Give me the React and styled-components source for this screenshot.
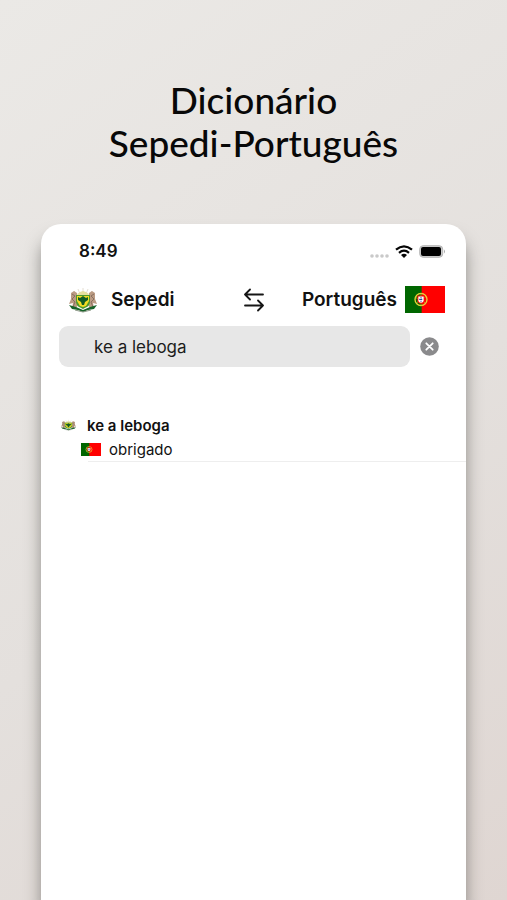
import React, { useState } from 'react'
import styled, { createGlobalStyle } from 'styled-components'

const GlobalStyle = createGlobalStyle`
    * {
        box-sizing: border-box;
    }
    body {
        margin: 0;
        font-family: Inter, "Liberation Sans", sans-serif;
        color: #111;
    }
    button {
        border: none;
        background: none;
        padding: 0;
        color: inherit;
        font-family: inherit;
        cursor: pointer;
    }
`

const Page = styled.div`
    min-height: 100vh;
    display: flex;
    flex-direction: column;
    background: linear-gradient(145deg, #ebe9e6 0%, #e4e0dd 55%, #dfd6d2 100%);
    overflow: hidden;
`

const Title = styled.h1`
    margin: 0;
    padding: 78px 16px 60px;
    font-family: Lato, sans-serif;
    font-size: 37px;
    font-weight: 500;
    line-height: 43px;
    text-align: center;
    color: #080808;
`

const Phone = styled.main`
    flex: 1;
    margin: 0 41px;
    background: #fff;
    border-radius: 20px 20px 0 0;
    box-shadow: 0 14px 16px rgba(60, 60, 55, 0.5);
`

const StatusBar = styled.div`
    display: flex;
    align-items: center;
    justify-content: space-between;
    height: 54px;
    padding: 0 20px 0 38px;
    font-size: 17px;
    font-weight: 600;
`

const StatusIcons = styled.div`
    display: flex;
    align-items: center;
    gap: 6px;

    svg:first-child {
        align-self: flex-end;
    }
`

const Languages = styled.div`
    display: grid;
    grid-template-columns: 1fr auto 1fr;
    align-items: center;
    height: 43px;
    padding: 0 21px;
`

const Language = styled.button`
    display: flex;
    align-items: center;
    justify-content: ${props => (props.$end ? "flex-end" : "flex-start")};
    gap: ${props => (props.$end ? "8px" : "14px")};
    padding-left: ${props => (props.$end ? "0" : "7px")};
    font-size: 19px;
    font-weight: 600;
`

const IconButton = styled.button`
    display: flex;
`

const SearchForm = styled.form`
    display: flex;
    align-items: center;
    gap: 10px;
    padding: 5px 27px 0 18px;
`

const SearchInput = styled.input`
    flex: 1;
    min-width: 0;
    height: 41px;
    padding: 0 35px;
    border: none;
    border-radius: 9px;
    outline: none;
    background: #e7e7e7;
    font-family: inherit;
    font-size: 17px;
    color: #1c1c1c;
`

const Results = styled.ul`
    list-style: none;
    margin: 0;
    padding: 46px 0 0 20px;
`

const Result = styled.li`
    display: flex;
    flex-direction: column;
`

const Line = styled.div`
    display: flex;
    align-items: center;
    height: 24px;
    gap: ${props => (props.$translation ? "8px" : "11px")};
    padding-left: ${props => (props.$translation ? "20px" : "0")};
    font-size: 15px;
    font-weight: ${props => (props.$translation ? "400" : "600")};
`

const Divider = styled.hr`
    align-self: stretch;
    height: 1px;
    margin: 0 0 0 27px;
    border: none;
    background: #eee;
`

const Flag = ({ width, height }) => (
    <svg width={width} height={height} viewBox="0 0 60 40" preserveAspectRatio="none" aria-hidden="true">
        <path fill="#f00" d="M0 0h60v40H0z" />
        <path fill="#060" d="M0 0h25v40H0z" />
        <circle cx="24" cy="20" r="9" fill="none" stroke="#e8d23a" strokeWidth="2" />
        <path d="M16 17l15 8M17 25l14-9M24 11v18" stroke="#c8b928" strokeWidth="1.2" />
        <path fill="#f00" d="M18.5 14h11v7c0 7-11 7-11 0z" />
        <path fill="#fff" d="M20 15.5h8V21c0 5-8 5-8 0z" />
        <path d="M24 16.5v7M21.3 19.7h5.4" stroke="#254b9b" strokeWidth="1.8" strokeDasharray="1.8 .8" />
    </svg>
)

const Crest = ({ width, height }) => (
    <svg width={width} height={height} viewBox="0 0 28 28" preserveAspectRatio="none" aria-hidden="true">
        <path d="M14 8V2M11 8L9 3M17 8l2-5M8 9L5 5M20 9l3-4" stroke="#ddd6c6" strokeWidth=".8" />
        <path fill="#bb9b84" d="M2 7l3-2 3 2v4l-1 3 2 5-2 3H3l1-5-4 1 2-5zM26 7l-3-2-3 2v4l1 3-2 5 2 3h4l-1-5 4 1-2-5z" />
        <path d="M3 8l3 2-3 3 3 3-2 5M25 8l-3 2 3 3-3 3 2 5" fill="none" stroke="#887060" strokeWidth="1" />
        <path fill="#176329" d="M0 19l7 2 7 3 7-3 7-2-3 4-6 1-5 2-5-2-6-1z" />
        <path fill="#e6dfa0" d="M8 8l3-2 3-1 3 1 3 2-2 3h-8z" />
        <path fill="#4f9a2c" d="M7 9h14v6c0 5-3 6-7 8-4-2-7-3-7-8z" />
        <path fill="#f2dc23" d="M8 10h12v5l-3 5-3 1-3-1-3-5z" />
        <path fill="#125d25" d="M9 11l2 1 3-2 3 2 2-1v3l-3 2-1 3h-2l-1-3-3-2z" />
        <path d="M6 24l8 2 8-2" fill="none" stroke="#8b9785" strokeWidth="1" />
    </svg>
)

const SwapIcon = () => (
    <svg width="20" height="24" viewBox="0 0 20 24" fill="none" stroke="#161616" strokeWidth="1.8" strokeLinecap="round" strokeLinejoin="round" aria-hidden="true">
        <path d="M6 1.5L1 6.5l5 5M1 6.5h18M14 12.5l5 5-5 5M19 17.5H1" />
    </svg>
)

const SignalIcon = () => (
    <svg width="19" height="4" viewBox="0 0 19 4" fill="#c9c9c9" aria-hidden="true">
        <circle cx="2" cy="2" r="1.8" />
        <circle cx="7" cy="2" r="1.8" />
        <circle cx="12" cy="2" r="1.8" />
        <circle cx="17" cy="2" r="1.8" />
    </svg>
)

const WifiIcon = () => (
    <svg width="18" height="13" viewBox="0 0 18 13" fill="none" stroke="#050505" strokeWidth="2.2" aria-hidden="true">
        <path d="M1 4.7Q9-2 17 4.7M4 7.8Q9 3.5 14 7.8" />
        <path d="M6 10Q9 7.3 12 10L9 13z" fill="#050505" stroke="none" />
    </svg>
)

const BatteryIcon = () => (
    <svg width="27" height="13" viewBox="0 0 27 13" aria-hidden="true">
        <rect x=".7" y=".7" width="23" height="11.6" rx="3.5" fill="#ccc" stroke="#b5b5b5" />
        <rect x="2" y="2" width="20" height="9" rx="2" fill="#000" />
        <path d="M25 4.5q2 2 0 4z" fill="#aaa" />
    </svg>
)

const ClearIcon = () => (
    <svg width="19" height="19" viewBox="0 0 19 19" aria-hidden="true">
        <circle cx="9.5" cy="9.5" r="9.3" fill="#8a8a8c" />
        <path d="M6.3 6.3l6.4 6.4M12.7 6.3l-6.4 6.4" stroke="#fff" strokeWidth="1.8" strokeLinecap="round" />
    </svg>
)

const entries = [{ sepedi: "ke a leboga", portuguese: "obrigado" }]

const App = () => {

    const [query, setQuery] = useState("ke a leboga")

    return (
        <Page>
            <GlobalStyle />
            <Title>Dicionário<br />Sepedi-Português</Title>
            <Phone>
                <StatusBar>
                    <span>8:49</span>
                    <StatusIcons>
                        <SignalIcon />
                        <WifiIcon />
                        <BatteryIcon />
                    </StatusIcons>
                </StatusBar>
                <Languages>
                    <Language type="button">
                        <Crest width={28} height={28} />
                        Sepedi
                    </Language>
                    <IconButton type="button" aria-label="Trocar idiomas">
                        <SwapIcon />
                    </IconButton>
                    <Language type="button" $end>
                        Português
                        <Flag width={40} height={27} />
                    </Language>
                </Languages>
                <SearchForm onSubmit={e => e.preventDefault()}>
                    <SearchInput
                        type="text"
                        aria-label="Pesquisar"
                        value={query}
                        onChange={e => setQuery(e.target.value)}
                    />
                    <IconButton type="button" aria-label="Limpar" onClick={() => setQuery("")}>
                        <ClearIcon />
                    </IconButton>
                </SearchForm>
                <Results>
                    {entries.map(entry => (
                        <Result key={entry.sepedi}>
                            <Line>
                                <Crest width={15} height={12} />
                                <span>{entry.sepedi}</span>
                            </Line>
                            <Line $translation>
                                <Flag width={20} height={13} />
                                <span>{entry.portuguese}</span>
                            </Line>
                            <Divider />
                        </Result>
                    ))}
                </Results>
            </Phone>
        </Page>
    )
}

export default App
